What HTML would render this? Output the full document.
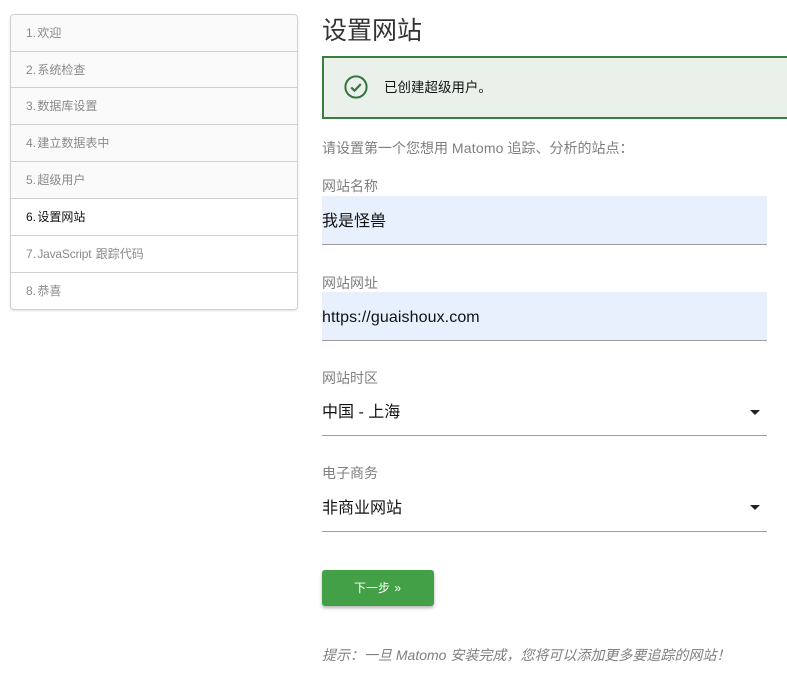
<!DOCTYPE html>
<html lang="zh-CN"><head><meta charset="utf-8"><title>设置网站</title>
<style>
html,body{margin:0;padding:0;background:#fff}
body{width:787px;height:675px;position:relative;overflow:hidden;font-family:"Liberation Sans","Noto Sans CJK SC",sans-serif}
.a{position:absolute;white-space:nowrap}
#side{left:10px;top:14px;width:286px;height:294px;border:1px solid #d0d0d0;border-radius:4px;box-shadow:0 1px 2px rgba(0,0,0,.12);overflow:hidden;background:#fff}
.r{position:absolute;left:0;width:286px;box-sizing:border-box;border-bottom:1px solid #cfcfcf;font-size:12px;color:#8a8a8a;padding-left:15px;background:#fafafa;word-spacing:-2px}
.w{background:#fff}
.l{left:322px;font-size:14px;line-height:20px;color:#7f7f7f}
.f{left:322px;width:445px;box-sizing:border-box;border-bottom:1px solid #9e9e9e;font-size:16px;color:#111;height:49px;line-height:52px}
.b{background:#e8f0fe}
.arr{left:750px;width:0;height:0;border-left:5px solid transparent;border-right:5px solid transparent;border-top:5px solid #222}
</style></head><body>
<div class="a" id="side">
<div class="r" style="top:0;height:37px;line-height:36px">1. 欢迎</div>
<div class="r" style="top:37px;height:36px;line-height:37px">2. 系统检查</div>
<div class="r" style="top:73px;height:37px;line-height:36px">3. 数据库设置</div>
<div class="r" style="top:110px;height:37px;line-height:36px">4. 建立数据表中</div>
<div class="r" style="top:147px;height:37px;line-height:36px">5. 超级用户</div>
<div class="r w" style="top:184px;height:37px;line-height:36px;color:#111">6. 设置网站</div>
<div class="r w" style="top:221px;height:37px;line-height:36px">7. <span style="letter-spacing:-.2px;margin-right:3px">JavaScript</span> 跟踪代码</div>
<div class="r w" style="top:258px;height:36px;line-height:36px;border-bottom:0">8. 恭喜</div>
</div>

<div class="a" style="left:322px;top:13px;font-size:25px;line-height:36px;color:#333">设置网站</div>

<div class="a" style="left:322px;top:56px;width:480px;height:63px;box-sizing:border-box;border:2px solid #3c7d3f;background:#e9f1ea"></div>
<svg class="a" style="left:344px;top:74.5px" width="24" height="24" viewBox="0 0 24 24" fill="none" stroke="#37733f"><circle cx="12" cy="12" r="10.6" stroke-width="2"/><path d="M7.2 12.4l3.3 3.3 6.3-6.6" stroke-width="2.2"/></svg>
<div class="a" style="left:384px;top:78px;font-size:13.4px;line-height:20px;color:#111;letter-spacing:.1px">已创建超级用户。</div>

<div class="a" style="left:322px;top:138px;font-size:14px;line-height:20px;color:#7f7f7f">请设置第一个您想用 <span style="letter-spacing:.2px">Matomo</span> 追踪、分析的站点：</div>

<div class="a l" style="top:176px">网站名称</div>
<div class="a f b" style="top:196px">我是怪兽</div>

<div class="a l" style="top:273px">网站网址</div>
<div class="a f b" style="top:292px;letter-spacing:.1px">https://guaishoux.com</div>

<div class="a l" style="top:368px">网站时区</div>
<div class="a f" style="top:387px">中国 - 上海</div>
<div class="a arr" style="top:410px"></div>

<div class="a l" style="top:463px">电子商务</div>
<div class="a f" style="top:483px">非商业网站</div>
<div class="a arr" style="top:505px"></div>

<div class="a" style="left:322px;top:570px;width:112px;height:36px;background:#43a047;border-radius:3px;box-shadow:0 2px 3px rgba(0,0,0,.3);color:#fff;font-size:12px;line-height:36px;text-align:center;text-indent:-1px;word-spacing:1px">下一步 »</div>

<div class="a" style="left:322px;top:645px;font-size:14px;line-height:20px;color:#7f7f7f;font-style:italic">提示：一旦 Matomo 安装完成，您将可以添加更多要追踪的网站！</div>
</body></html>
